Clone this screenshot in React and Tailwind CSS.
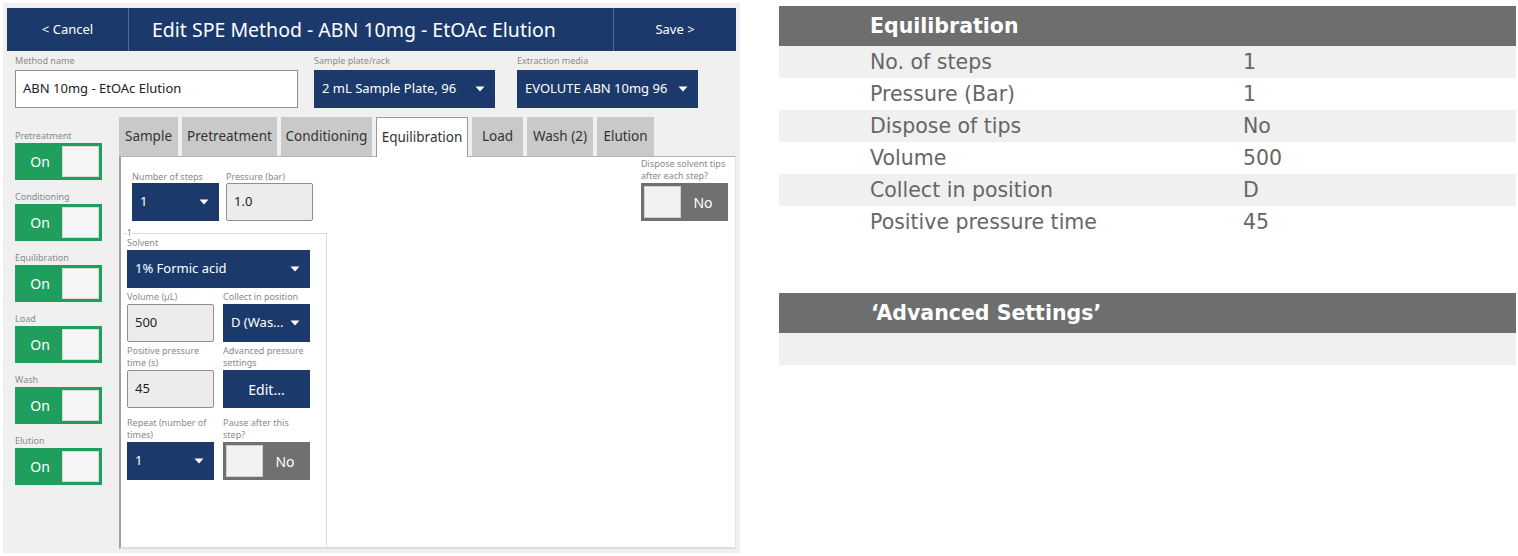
import React from "react";

const appFont = { fontFamily: '"Noto Sans", "Open Sans", sans-serif' };
const tableFont = { fontFamily: '"DejaVu Sans", Verdana, sans-serif' };

function Caret() {
  return (
    <svg width="10" height="6" viewBox="0 0 10 6" className="shrink-0">
      <path d="M0.5 0.5h9L5 5.5z" fill="white" />
    </svg>
  );
}

function Label({ children, className = "" }) {
  return (
    <div className={`text-[9px] leading-[12px] text-[#8a8a8a] whitespace-nowrap ${className}`}>
      {children}
    </div>
  );
}

function Select({ value, className = "" }) {
  return (
    <div
      className={`flex items-center justify-between bg-[#1b3a6b] text-white h-[38px] pl-[8px] pr-[10px] text-[13px] ${className}`}
    >
      <span className="whitespace-nowrap">{value}</span>
      <Caret />
    </div>
  );
}

function GrayInput({ value }) {
  return (
    <div className="flex items-center w-[87px] h-[38px] bg-[#ececec] border-[1.5px] border-[#8f8f8f] rounded-[2px] pl-[7px] text-[13px] text-[#222]">
      {value}
    </div>
  );
}

function ToggleOn() {
  return (
    <div className="flex w-[87px] h-[37px] bg-[#1f9e5d] p-[3px]">
      <div className="flex-1 flex items-center justify-center text-white text-[14px]">On</div>
      <div className="w-[37px] h-full bg-[#f5f5f5] border border-[#d9d9d9]" />
    </div>
  );
}

function ToggleNo() {
  return (
    <div className="flex w-[87px] h-[38px] bg-[#707070] p-[3px]">
      <div className="w-[37px] h-full bg-[#f2f2f2] border border-[#d0d0d0]" />
      <div className="flex-1 flex items-center justify-center text-white text-[14px]">No</div>
    </div>
  );
}

const sideItems = ["Pretreatment", "Conditioning", "Equilibration", "Load", "Wash", "Elution"];

const tabs = [
  { name: "Sample", w: "w-[59px]" },
  { name: "Pretreatment", w: "w-[95px]" },
  { name: "Conditioning", w: "w-[91px]" },
  { name: "Equilibration", w: "w-[92px]", active: true },
  { name: "Load", w: "w-[51px]" },
  { name: "Wash (2)", w: "w-[66px]" },
  { name: "Elution", w: "w-[57px]" },
];

const rows = [
  ["No. of steps", "1"],
  ["Pressure (Bar)", "1"],
  ["Dispose of tips", "No"],
  ["Volume", "500"],
  ["Collect in position", "D"],
  ["Positive pressure time", "45"],
];

export default function App() {
  return (
    <div className="flex w-[1518px] h-[556px] bg-white overflow-hidden">
      {/* Left: app screenshot */}
      <div
        className="ml-[3px] mt-[3px] w-[737px] h-[550px] bg-[#f0f0f0] flex flex-col pt-[5px] px-[4px] pb-[4px]"
        style={appFont}
      >
        {/* header */}
        <div className="flex h-[43px] bg-[#1b3a6b] text-white shrink-0">
          <div className="w-[122px] flex items-center justify-center text-[13px] border-r border-[#4b6ea3]">
            &lt; Cancel
          </div>
          <div className="flex-1 flex items-center pl-[23px] text-[19.5px] whitespace-nowrap">
            Edit SPE Method - ABN 10mg - EtOAc Elution
          </div>
          <div className="w-[123px] flex items-center justify-center text-[13px] border-l border-[#4b6ea3]">
            Save &gt;
          </div>
        </div>

        {/* form row */}
        <div className="flex h-[66px] pt-[4px] shrink-0">
          <div className="ml-[8px] w-[283px] flex flex-col">
            <Label>Method name</Label>
            <div className="mt-[3px] h-[38px] bg-white border border-[#8f8f8f] flex items-center pl-[7px] text-[13px] text-[#222]">
              ABN 10mg - EtOAc Elution
            </div>
          </div>
          <div className="ml-[16px] w-[181px] flex flex-col">
            <Label>Sample plate/rack</Label>
            <Select className="mt-[3px] w-[181px]" value="2 mL Sample Plate, 96" />
          </div>
          <div className="ml-[22px] w-[181px] flex flex-col">
            <Label>Extraction media</Label>
            <Select className="mt-[3px] w-[181px]" value="EVOLUTE ABN 10mg 96" />
          </div>
        </div>

        {/* main */}
        <div className="flex flex-1 min-h-0">
          {/* sidebar */}
          <div className="w-[112px] pl-[8px] pt-[12px] flex flex-col gap-[10px]">
            {sideItems.map((s) => (
              <div key={s} className="flex flex-col">
                <Label className="h-[14px] leading-[14px]">{s}</Label>
                <ToggleOn />
              </div>
            ))}
          </div>

          {/* tabs + panel */}
          <div className="w-[617px] flex flex-col">
            <div className="flex gap-[4px] h-[39px] shrink-0">
              {tabs.map((t) =>
                t.active ? (
                  <div
                    key={t.name}
                    className={`${t.w} h-[40px] relative z-10 bg-white border border-b-0 border-[#9a9a9a] flex items-center justify-center text-[13.5px] text-[#333]`}
                  >
                    {t.name}
                  </div>
                ) : (
                  <div
                    key={t.name}
                    className={`${t.w} h-[39px] bg-[#c9c9c9] flex items-center justify-center text-[13.5px] text-[#333]`}
                  >
                    {t.name}
                  </div>
                )
              )}
            </div>
            <div className="flex-1 bg-white border-t border-t-[#b5b5b5] border-l-2 border-l-[#a0a0a0] border-b-2 border-b-[#dedede] border-r border-r-[#e2e2e2] flex flex-col">
              {/* top row */}
              <div className="flex items-end pt-[1px] shrink-0">
                <div className="ml-[11px] flex flex-col">
                  <Label>Number of steps</Label>
                  <Select className="w-[87px]" value="1" />
                </div>
                <div className="ml-[7px] flex flex-col">
                  <Label>Pressure (bar)</Label>
                  <GrayInput value="1.0" />
                </div>
                <div className="flex-1" />
                <div className="mr-[6px] w-[88px] flex flex-col">
                  <Label className="whitespace-normal">
                    Dispose solvent tips
                    <br />
                    after each step?
                  </Label>
                  <div className="mt-[1px]">
                    <ToggleNo />
                  </div>
                </div>
              </div>

              {/* step box */}
              <fieldset className="mt-[8px] ml-[3px] w-[203px] flex-1 border-t border-r border-[#dcdcdc] pl-[3px]">
                <legend className="text-[8px] leading-[8px] text-[#777] px-0">1</legend>
                <Label>Solvent</Label>
                <Select className="mt-[1px] w-[183px]" value="1% Formic acid" />

                <div className="flex gap-[9px] mt-[3px]">
                  <div className="w-[87px] flex flex-col">
                    <Label>Volume (µL)</Label>
                    <div className="mt-[1px]">
                      <GrayInput value="500" />
                    </div>
                  </div>
                  <div className="w-[87px] flex flex-col">
                    <Label>Collect in position</Label>
                    <Select className="mt-[1px] w-[87px]" value="D (Was..." />
                  </div>
                </div>

                <div className="flex gap-[9px] mt-[3px]">
                  <div className="w-[87px] flex flex-col">
                    <Label className="whitespace-normal">
                      Positive pressure
                      <br />
                      time (s)
                    </Label>
                    <div className="mt-[1px]">
                      <GrayInput value="45" />
                    </div>
                  </div>
                  <div className="w-[87px] flex flex-col">
                    <Label className="whitespace-normal">
                      Advanced pressure
                      <br />
                      settings
                    </Label>
                    <div className="mt-[1px] h-[38px] w-[87px] bg-[#1b3a6b] text-white flex items-center justify-center text-[14px]">
                      Edit...
                    </div>
                  </div>
                </div>

                <div className="flex gap-[9px] mt-[9px]">
                  <div className="w-[87px] flex flex-col">
                    <Label className="whitespace-normal">
                      Repeat (number of
                      <br />
                      times)
                    </Label>
                    <Select className="mt-[1px] w-[87px]" value="1" />
                  </div>
                  <div className="w-[87px] flex flex-col">
                    <Label className="whitespace-normal">
                      Pause after this
                      <br />
                      step?
                    </Label>
                    <div className="mt-[1px]">
                      <ToggleNo />
                    </div>
                  </div>
                </div>
              </fieldset>
            </div>
          </div>
        </div>
      </div>

      {/* Right: summary table */}
      <div className="ml-[39px] mt-[6px] w-[737px] flex flex-col" style={tableFont}>
        <div className="h-[40px] bg-[#6e6e6e] flex items-center pl-[91px] text-white font-bold text-[20.5px]">
          Equilibration
        </div>
        {rows.map(([k, v], i) => (
          <div
            key={k}
            className={`h-[32px] flex items-center pl-[91px] text-[#666] text-[20.5px] ${
              i % 2 === 0 ? "bg-[#f0f0f0]" : "bg-white"
            }`}
          >
            <span className="w-[373px] whitespace-nowrap">{k}</span>
            <span>{v}</span>
          </div>
        ))}
        <div className="mt-[55px] h-[40px] bg-[#6e6e6e] flex items-center pl-[92px] text-white font-bold text-[20.5px]">
          ‘Advanced Settings’
        </div>
        <div className="h-[32px] bg-[#f0f0f0]" />
      </div>
    </div>
  );
}
